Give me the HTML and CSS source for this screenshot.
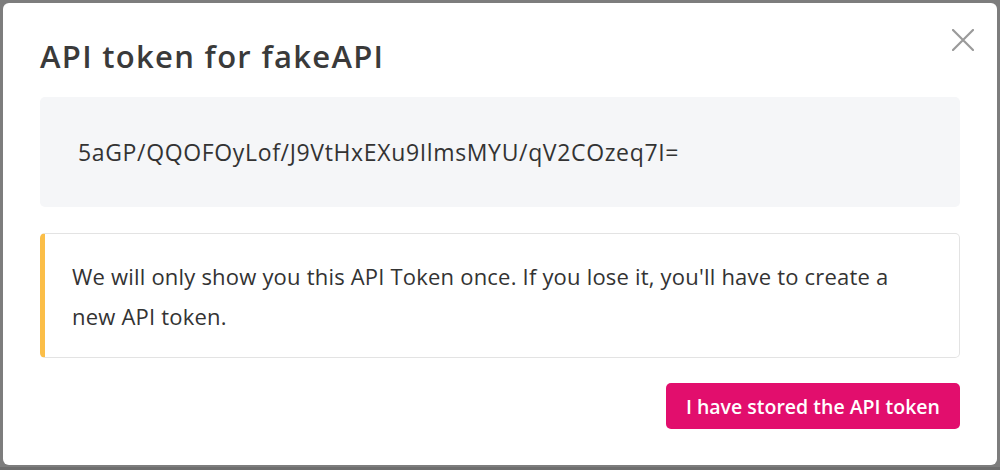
FILE: index.html
```html
<!DOCTYPE html>
<html>
<head>
<meta charset="utf-8">
<link rel="stylesheet" href="styles.css">
</head>
<body>
<div class="backdrop">
  <div class="modal">
    <div class="header">
      <h1 class="title">API token for fakeAPI</h1>
      <button class="close" aria-label="Close">
        <svg width="22" height="22" viewBox="0 0 22 22"><path d="M1 1L21 21M21 1L1 21" stroke="#9a9a9a" stroke-width="2.2" stroke-linecap="round"/></svg>
      </button>
    </div>
    <div class="token">5aGP/QQOFOyLof/J9VtHxEXu9IlmsMYU/qV2COzeq7I=</div>
    <div class="alert">We will only show you this API Token once. If you lose it, you'll have to create a new API token.</div>
    <div class="footer">
      <button class="primary">I have stored the API token</button>
    </div>
  </div>
</div>
</body>
</html>
```
FILE: styles.css
```css
html, body {
  margin: 0;
  padding: 0;
}
body {
  background: #7d7d7d;
  font-family: "Open Sans", "Noto Sans", sans-serif;
  color: #363636;
}
.backdrop {
  width: 1000px;
  height: 470px;
  padding-top: 3px;
  box-sizing: border-box;
  overflow: hidden;
  border-bottom: 3px solid #6e6e6e;
}
.modal {
  margin: 0 3px;
  width: 994px;
  height: 462px;
  box-sizing: border-box;
  background: #fff;
  border-radius: 6px;
  padding: 0 37px;
}
.header {
  display: flex;
  justify-content: space-between;
  align-items: flex-start;
  padding-top: 33px;
}
.title {
  margin: 0;
  font-size: 31px;
  line-height: 40px;
  font-weight: 600;
  color: #3a3a3a;
  letter-spacing: 1.3px;
}
.close {
  border: 0;
  background: none;
  padding: 0;
  margin: -7px -14px 0 0;
  width: 22px;
  height: 22px;
  cursor: pointer;
}
.close svg { display: block; }
.token {
  margin-top: 21px;
  height: 110px;
  background: #f5f6f8;
  border-radius: 5px;
  padding: 0 38px;
  display: flex;
  align-items: center;
  font-size: 23px;
  color: #333;
  letter-spacing: 0.65px;
}
.alert {
  margin-top: 26px;
  height: 125px;
  box-sizing: border-box;
  border: 1px solid #e3e3e3;
  border-left: 5px solid #fbbe48;
  border-radius: 5px;
  padding: 22px 50px 0 27px;
  font-size: 22px;
  line-height: 40px;
  color: #333;
  letter-spacing: 0.2px;
}
.footer {
  display: flex;
  justify-content: flex-end;
  margin-top: 25px;
}
.primary {
  border: 0;
  background: #e20e6d;
  color: #fff;
  font-family: "Open Sans", "Noto Sans", sans-serif;
  font-size: 19.5px;
  font-weight: 600;
  height: 46px;
  padding: 0 20px;
  border-radius: 5px;
  cursor: pointer;
}
```
